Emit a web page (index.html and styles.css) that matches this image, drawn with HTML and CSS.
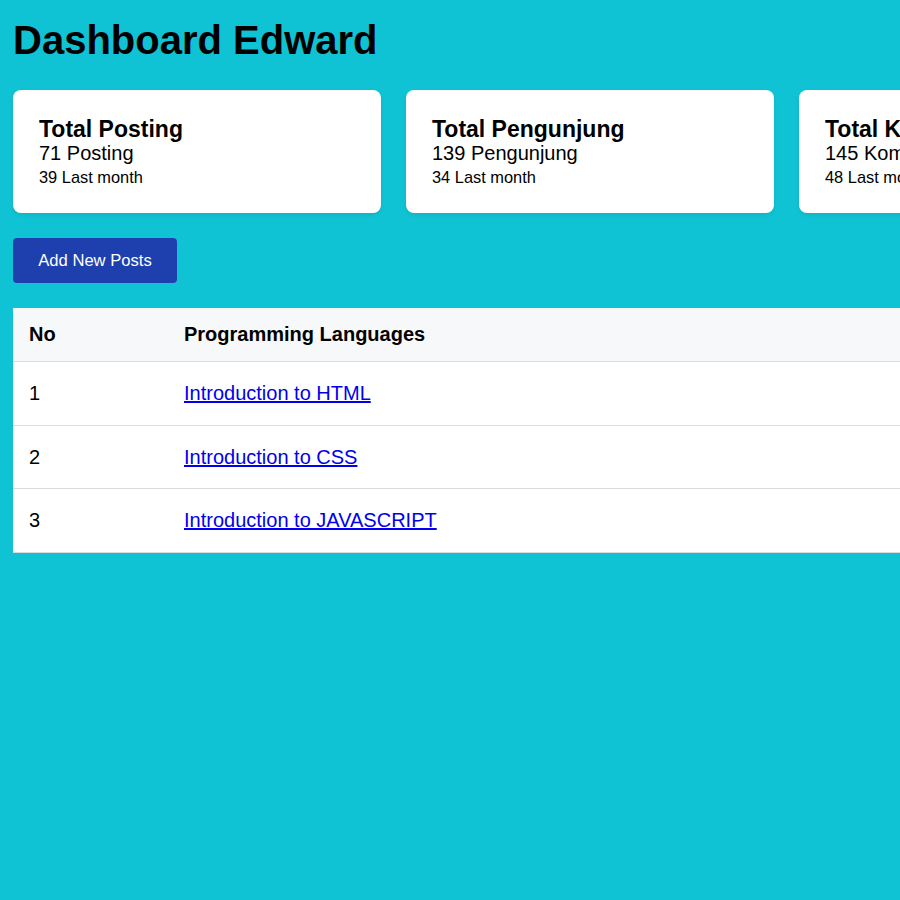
FILE: index.html
```html
<!DOCTYPE html>
<html lang="id">
<head>
<meta charset="utf-8">
<title>Dashboard Edward</title>
<link rel="stylesheet" href="styles.css">
</head>
<body>
<main class="page">
  <h1 class="title">Dashboard Edward</h1>
  <section class="cards">
    <div class="card">
      <h3 class="card-title">Total Posting</h3>
      <p class="card-value">71 Posting</p>
      <p class="card-sub">39 Last month</p>
    </div>
    <div class="card">
      <h3 class="card-title">Total Pengunjung</h3>
      <p class="card-value">139 Pengunjung</p>
      <p class="card-sub">34 Last month</p>
    </div>
    <div class="card">
      <h3 class="card-title">Total Komentar</h3>
      <p class="card-value">145 Komentar</p>
      <p class="card-sub">48 Last month</p>
    </div>
  </section>
  <div class="actions">
    <button class="btn" type="button">Add New Posts</button>
  </div>
  <table class="posts">
    <thead>
      <tr><th class="col-no">No</th><th>Programming Languages</th></tr>
    </thead>
    <tbody>
      <tr><td>1</td><td><a href="#">Introduction to HTML</a></td></tr>
      <tr><td>2</td><td><a href="#">Introduction to CSS</a></td></tr>
      <tr><td>3</td><td><a href="#">Introduction to JAVASCRIPT</a></td></tr>
    </tbody>
  </table>
</main>
</body>
</html>
```

FILE: styles.css
```css
html, body {
  margin: 0;
  padding: 0;
}
body {
  background: #10c3d4;
  font-family: "Liberation Sans", Arial, sans-serif;
  color: #000;
  overflow: hidden;
}
.page {
  padding: 17px 13px 13px;
  width: 1154px;
}
.title {
  margin: 0 0 27px;
  font-size: 40px;
  font-weight: 700;
  line-height: 46px;
}
.cards {
  display: flex;
  gap: 25px;
}
.card {
  flex: 0 0 368px;
  box-sizing: border-box;
  background: #fff;
  border-radius: 8px;
  padding: 26px;
  height: 123px;
  box-shadow: 0 2px 4px rgba(0, 0, 0, 0.08);
}
.card-title {
  margin: 0;
  font-size: 23px;
  font-weight: 700;
  line-height: 26px;
}
.card-value {
  margin: 0;
  font-size: 20px;
  line-height: 23px;
}
.card-sub {
  margin: 3px 0 0;
  font-size: 16.4px;
  line-height: 19px;
}
.actions {
  margin-top: 25px;
}
.btn {
  background: #1e40af;
  color: #fff;
  border: 0;
  border-radius: 4px;
  width: 164px;
  height: 45px;
  padding: 0;
  font-family: "Liberation Sans", Arial, sans-serif;
  font-size: 16.6px;
}
.posts {
  margin-top: 25px;
  width: 100%;
  border-collapse: collapse;
  background: #fff;
}
.posts th {
  text-align: left;
  font-size: 20px;
  font-weight: 700;
  padding: 15px 16px;
  line-height: 23px;
  background: #f7f8fa;
  border-bottom: 1px solid #dcdcdc;
}
.posts td {
  font-size: 20px;
  padding: 20px 16px;
  line-height: 22.6px;
  border-bottom: 1px solid #dcdcdc;
}
.col-no {
  width: 123px;
}
.posts a {
  color: #0000ee;
}
```
